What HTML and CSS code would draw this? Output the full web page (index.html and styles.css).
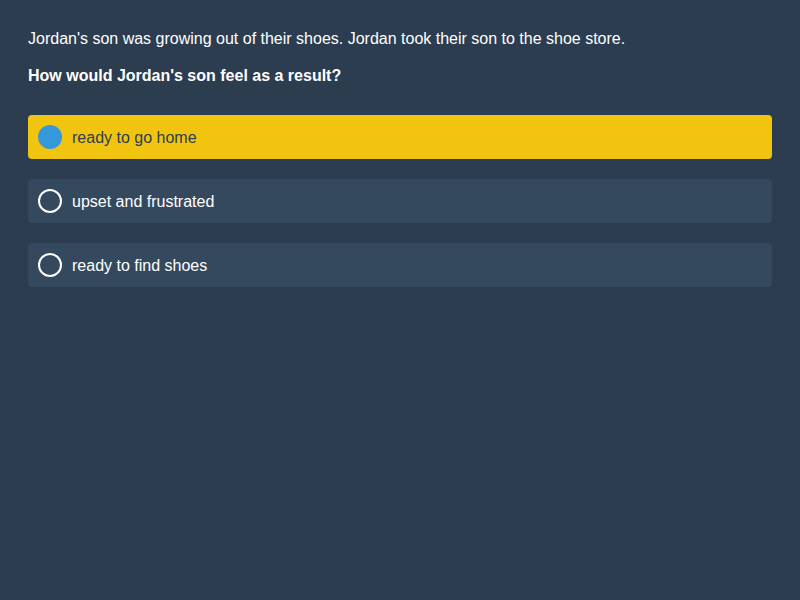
FILE: index.html
```html
<!DOCTYPE html>
<html>
<head>
<meta charset="utf-8">
<link rel="stylesheet" href="styles.css">
</head>
<body>
<main class="quiz">
  <p class="story">Jordan's son was growing out of their shoes. Jordan took their son to the shoe store.</p>
  <p class="question">How would Jordan's son feel as a result?</p>
  <div class="options">
    <div class="option selected"><span class="radio"></span><span class="label">ready to go home</span></div>
    <div class="option"><span class="radio"></span><span class="label">upset and frustrated</span></div>
    <div class="option"><span class="radio"></span><span class="label">ready to find shoes</span></div>
  </div>
</main>
</body>
</html>
```
FILE: styles.css
```css
html, body {
  margin: 0;
  padding: 0;
  height: 100%;
}
body {
  background: #2d3d50;
  font-family: "Liberation Sans", Arial, sans-serif;
  font-size: 16px;
  color: #ffffff;
}
.quiz {
  padding: 29px 28px 28px;
}
.story {
  margin: 0 0 17px;
  line-height: 20px;
}
.question {
  margin: 0 0 29px;
  line-height: 20px;
  font-weight: bold;
}
.options {
  display: flex;
  flex-direction: column;
  gap: 20px;
}
.option {
  display: flex;
  align-items: center;
  gap: 10px;
  height: 44px;
  padding: 0 10px;
  box-sizing: border-box;
  background: #34495e;
  border-radius: 4px;
}
.label {
  padding-top: 2px;
}
.radio {
  width: 24px;
  height: 24px;
  box-sizing: border-box;
  border: 2px solid #ffffff;
  border-radius: 50%;
  flex: none;
}
.option.selected {
  background: #f1c40f;
  color: #2c3e50;
}
.option.selected .radio {
  background: #3498db;
  border: none;
}
```
